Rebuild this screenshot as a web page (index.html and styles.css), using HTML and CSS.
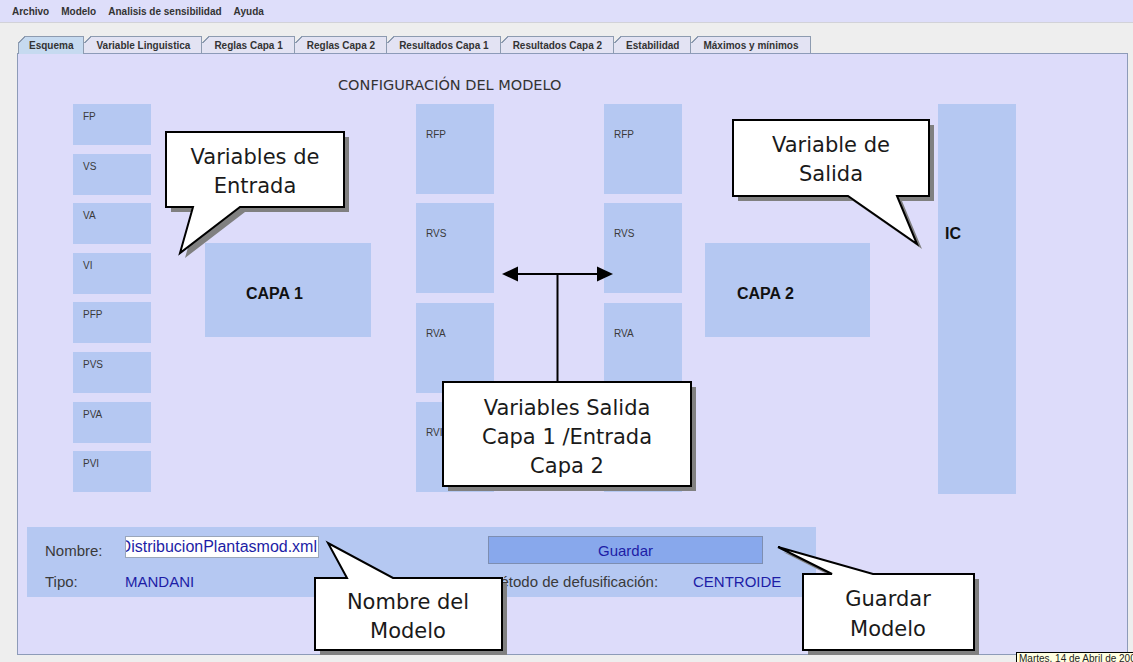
FILE: index.html
```html
<!DOCTYPE html>
<html lang="es">
<head>
    <meta charset="UTF-8">
    <meta name="viewport" content="width=device-width, initial-scale=1.0">
    <title>Configuración del modelo</title>
    <link rel="stylesheet" href="styles.css">
</head>
<body>
    <div class="menubar">
        <span>Archivo</span>
        <span>Modelo</span>
        <span>Analisis de sensibilidad</span>
        <span>Ayuda</span>
    </div>

    <div class="workarea">
        <div class="tabs">
            <div class="tab selected">Esquema</div>
            <div class="tab">Variable Linguistica</div>
            <div class="tab">Reglas Capa 1</div>
            <div class="tab">Reglas Capa 2</div>
            <div class="tab">Resultados Capa 1</div>
            <div class="tab">Resultados Capa 2</div>
            <div class="tab">Estabilidad</div>
            <div class="tab">Máximos y mínimos</div>
        </div>

        <div class="panel">
            <div class="title">CONFIGURACIÓN DEL MODELO</div>

            <div class="diagram">
                <div class="inputs">
                    <div class="var">FP</div>
                    <div class="var">VS</div>
                    <div class="var">VA</div>
                    <div class="var">VI</div>
                    <div class="var">PFP</div>
                    <div class="var">PVS</div>
                    <div class="var">PVA</div>
                    <div class="var">PVI</div>
                </div>
                <div class="capa capa1">CAPA 1</div>
                <div class="rules">
                    <div class="rule">RFP</div>
                    <div class="rule">RVS</div>
                    <div class="rule">RVA</div>
                    <div class="rule">RVI</div>
                </div>
                <div class="rules second">
                    <div class="rule">RFP</div>
                    <div class="rule">RVS</div>
                    <div class="rule">RVA</div>
                    <div class="rule">RVI</div>
                </div>
                <div class="capa capa2">CAPA 2</div>
                <div class="output">IC</div>
            </div>

            <div class="footer">
                <span class="label">Nombre:</span>
                <div class="field"><span>DistribucionPlantasmod.xml</span></div>
                <div class="save-btn">Guardar</div>
                <span class="label">Tipo:</span>
                <span class="value">MANDANI</span>
                <span class="label">Método de defusificación:</span>
                <span class="value">CENTROIDE</span>
            </div>
        </div>
    </div>

    <!-- notas del esquema (globos) -->
    <svg class="notes" width="1133" height="662" viewBox="0 0 1133 662">
        <g class="shadow">
            <path d="M166,132 H344 V207 H240 L180,253 L193,207 H166 Z"/>
            <path d="M733,120 H929 V196 H897 L917,244 L848,196 H733 Z"/>
            <path d="M443,382 H691 V486 H443 Z"/>
            <path d="M315,578 H347 L328,543 L393,578 H502 V650 H315 Z"/>
            <path d="M803,574 H832 L778,547 L873,574 H974 V650 H803 Z"/>
        </g>
        <g class="arrow">
            <line x1="516" y1="274" x2="599" y2="274"/>
            <line x1="557.5" y1="274" x2="557.5" y2="383"/>
            <path d="M502,274 L518,266.5 L518,281.5 Z"/>
            <path d="M613,274 L597,266.5 L597,281.5 Z"/>
        </g>
        <g class="bubble">
            <path d="M166,132 H344 V207 H240 L180,253 L193,207 H166 Z"/>
            <path d="M733,120 H929 V196 H897 L917,244 L848,196 H733 Z"/>
            <path d="M443,382 H691 V486 H443 Z"/>
            <path d="M315,578 H347 L328,543 L393,578 H502 V650 H315 Z"/>
            <path d="M803,574 H832 L778,547 L873,574 H974 V650 H803 Z"/>
        </g>
        <g class="note-text">
            <text x="255" y="164">Variables de</text>
            <text x="255" y="193">Entrada</text>
            <text x="831" y="152">Variable de</text>
            <text x="831" y="181">Salida</text>
            <text x="567" y="415">Variables Salida</text>
            <text x="567" y="444">Capa 1 /Entrada</text>
            <text x="567" y="473">Capa 2</text>
            <text x="408" y="609">Nombre del</text>
            <text x="408" y="638">Modelo</text>
            <text x="888" y="606">Guardar</text>
            <text x="888" y="636">Modelo</text>
        </g>
    </svg>

    <div class="tooltip">Martes, 14 de Abril de 2009</div>
</body>
</html>
```

FILE: styles.css
```css
body {
    margin: 0;
    width: 1133px;
    height: 662px;
    overflow: hidden;
    position: relative;
    background: #eeeeee;
    font-family: "Liberation Sans", Arial, sans-serif;
    color: #333333;
}

.menubar {
    height: 23px;
    background: #dedefa;
    border-bottom: 1px solid #d2d2d8;
    box-sizing: border-box;
    display: flex;
    align-items: center;
    padding-left: 12px;
    gap: 12px;
    font-size: 10px;
    font-weight: bold;
}

.workarea {
    padding: 13px 0 0 17px;
}

.tabs {
    display: flex;
    margin-left: 1px;
    height: 17px;
    position: relative;
    z-index: 1;
}
.tab {
    position: relative;
    height: 17px;
    box-sizing: border-box;
    padding: 0 11px;
    border: 1px solid #8d9bb0;
    border-bottom: none;
    border-left-color: transparent;
    background: #e3e3f3;
    font-size: 10px;
    font-weight: bold;
    line-height: 17px;
    white-space: nowrap;
}
.tab::before {
    content: "";
    position: absolute;
    top: -1px;
    left: -1px;
    width: 7px;
    height: 7px;
    background: linear-gradient(135deg, #eeeeee 0 46%, #8d9bb0 46% 60%, transparent 60%);
}
.tab.selected {
    background: #c6daf0;
    border-left-color: #8d9bb0;
    height: 18px;
    padding: 0 10px;
}
.tab:first-child {
    border-left-color: #8d9bb0;
}

.panel {
    width: 1111px;
    height: 602px;
    box-sizing: border-box;
    border: 1px solid #8d9bb8;
    background: #dddcfa;
}

.title {
    margin: 23px 0 0 320px;
    height: 16px;
    line-height: 16px;
    font-family: "DejaVu Sans", Verdana, sans-serif;
    font-size: 14.5px;
    color: #333333;
}

.diagram {
    margin-top: 11px;
    padding-left: 55px;
    display: flex;
    align-items: flex-start;
    height: 390px;
}
.inputs {
    display: grid;
    grid-template-rows: repeat(8, 41px);
    row-gap: 8.6px;
    width: 78px;
}
.var, .rule {
    background: #b5c8f2;
    font-size: 10px;
    color: #3a3a3a;
    padding-left: 10px;
    box-sizing: border-box;
}
.var {
    padding-top: 7px;
}
.rules {
    display: grid;
    grid-template-rows: repeat(4, 90px);
    row-gap: 9.3px;
    width: 78px;
    margin-left: 45px;
}
.rules.second {
    margin-left: 110px;
}
.rule {
    padding-top: 25px;
}
.capa {
    margin-top: 139px;
    width: 166px;
    height: 94px;
    background: #b5c8f2;
    box-sizing: border-box;
    display: flex;
    align-items: center;
    padding-top: 8px;
    font-size: 16px;
    font-weight: bold;
    color: #111111;
}
.capa1 {
    margin-left: 54px;
    padding-left: 41px;
}
.capa2 {
    margin-left: 23px;
    width: 165px;
    padding-left: 32px;
}
.output {
    margin-left: 68px;
    width: 78px;
    height: 390px;
    background: #b5c8f2;
    box-sizing: border-box;
    padding: 121px 0 0 7px;
    font-size: 16px;
    font-weight: bold;
    color: #111111;
}

.footer {
    margin: 33px 0 0 9px;
    width: 789px;
    height: 70px;
    box-sizing: border-box;
    background: #b5c8f2;
    padding: 9px 0 0 18px;
    display: grid;
    grid-template-columns: 80px 363px 205px 70px;
    grid-template-rows: 28px 24px;
    row-gap: 5px;
    align-items: center;
    font-size: 15px;
}
.footer .label {
    color: #3a3a3a;
}
.footer .value {
    color: #1d1da6;
}
.field {
    width: 194px;
    height: 22px;
    align-self: start;
    box-sizing: border-box;
    border: 1px solid #9aa6ba;
    background: #ffffff;
    color: #1d1da6;
    font-size: 16px;
    display: flex;
    justify-content: flex-end;
    align-items: center;
    overflow: hidden;
    white-space: nowrap;
    padding-right: 1px;
}
.save-btn {
    grid-column: 3 / 5;
    width: 275px;
    height: 28px;
    box-sizing: border-box;
    border: 1px solid #7d8eb2;
    background: #88a8ec;
    color: #1d1da6;
    display: flex;
    align-items: center;
    justify-content: center;
}

.notes {
    position: absolute;
    top: 0;
    left: 0;
    pointer-events: none;
}
.notes .shadow path {
    fill: #808080;
    transform: translate(5px, 5px);
}
.notes .bubble path {
    fill: #ffffff;
    stroke: #000000;
    stroke-width: 2;
    stroke-linejoin: miter;
}
.notes .arrow line {
    stroke: #000000;
    stroke-width: 2;
}
.notes .arrow path {
    fill: #000000;
}
.notes .note-text text {
    font-family: "DejaVu Sans", Verdana, sans-serif;
    font-size: 21px;
    fill: #1a1a1a;
    text-anchor: middle;
}

.tooltip {
    position: absolute;
    top: 652px;
    left: 1016px;
    background: #ffffe1;
    border: 1px solid #000000;
    font-size: 10px;
    line-height: 12px;
    padding: 0 2px;
    white-space: nowrap;
    color: #222222;
}
```
